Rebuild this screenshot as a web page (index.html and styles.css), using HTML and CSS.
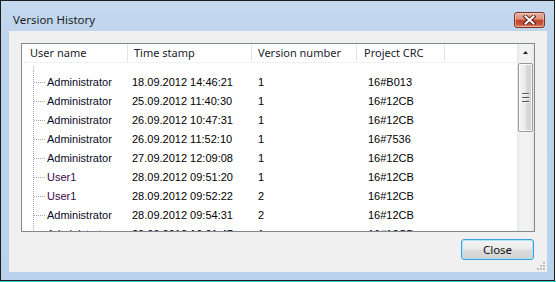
FILE: index.html
```html
<!DOCTYPE html>
<html>
<head>
<meta charset="utf-8">
<link rel="stylesheet" href="styles.css">
</head>
<body>
<div class="window">
  <div class="titlebar">
    <span class="title">Version History</span>
    <div class="xbtn">
      <svg width="13" height="10" viewBox="0 0 13 10">
        <path d="M2.5 1.5 L10.5 8.5 M10.5 1.5 L2.5 8.5" stroke="#5a2218" stroke-width="4" stroke-linecap="square" fill="none"/>
        <path d="M2.5 1.5 L10.5 8.5 M10.5 1.5 L2.5 8.5" stroke="#ffffff" stroke-width="2" stroke-linecap="square" fill="none"/>
      </svg>
    </div>
  </div>
  <div class="client">
    <div class="listview">
      <div class="lv-main">
        <div class="lv-header">
          <div class="hcell h1">User name</div>
          <div class="hcell h2">Time stamp</div>
          <div class="hcell h3">Version number</div>
          <div class="hcell h4">Project CRC</div>
          <div class="hcell h5"></div>
        </div>
        <div class="rows">
          <div class="rows-inner">
            <div class="row"><div class="c1"><span class="stub"></span><span class="admin">Administrator</span></div><div class="c2">18.09.2012 14:46:21</div><div class="c3">1</div><div class="c4">16#B013</div><div></div></div>
            <div class="row"><div class="c1"><span class="stub"></span><span class="admin">Administrator</span></div><div class="c2">25.09.2012 11:40:30</div><div class="c3">1</div><div class="c4">16#12CB</div><div></div></div>
            <div class="row"><div class="c1"><span class="stub"></span><span class="admin">Administrator</span></div><div class="c2">26.09.2012 10:47:31</div><div class="c3">1</div><div class="c4">16#12CB</div><div></div></div>
            <div class="row"><div class="c1"><span class="stub"></span><span class="admin">Administrator</span></div><div class="c2">26.09.2012 11:52:10</div><div class="c3">1</div><div class="c4">16#7536</div><div></div></div>
            <div class="row"><div class="c1"><span class="stub"></span><span class="admin">Administrator</span></div><div class="c2">27.09.2012 12:09:08</div><div class="c3">1</div><div class="c4">16#12CB</div><div></div></div>
            <div class="row"><div class="c1"><span class="stub"></span><span class="user">User1</span></div><div class="c2">28.09.2012 09:51:20</div><div class="c3">1</div><div class="c4">16#12CB</div><div></div></div>
            <div class="row"><div class="c1"><span class="stub"></span><span class="user">User1</span></div><div class="c2">28.09.2012 09:52:22</div><div class="c3">2</div><div class="c4">16#12CB</div><div></div></div>
            <div class="row"><div class="c1"><span class="stub"></span><span class="admin">Administrator</span></div><div class="c2">28.09.2012 09:54:31</div><div class="c3">2</div><div class="c4">16#12CB</div><div></div></div>
            <div class="row"><div class="c1"><span class="stub"></span><span class="admin">Administrator</span></div><div class="c2">28.09.2012 10:01:47</div><div class="c3">1</div><div class="c4">16#12CB</div><div></div></div>
          </div>
        </div>
      </div>
      <div class="vscroll">
        <div class="sb-up">
          <svg width="5" height="3" viewBox="0 0 5 3"><polygon points="2.5,0 5,3 0,3" fill="#222"/></svg>
        </div>
        <div class="sb-thumb">
          <span class="grip-line"></span>
          <span class="grip-line"></span>
          <span class="grip-line"></span>
        </div>
      </div>
    </div>
    <div class="buttons">
      <button class="btn">Close</button>
    </div>
    <svg class="sizegrip" width="10" height="10" viewBox="0 0 10 10">
      <rect x="7" y="1" width="2" height="2" fill="#bdbdbd"/>
      <rect x="4" y="4" width="2" height="2" fill="#bdbdbd"/>
      <rect x="7" y="4" width="2" height="2" fill="#bdbdbd"/>
      <rect x="1" y="7" width="2" height="2" fill="#bdbdbd"/>
      <rect x="4" y="7" width="2" height="2" fill="#bdbdbd"/>
      <rect x="7" y="7" width="2" height="2" fill="#bdbdbd"/>
    </svg>
  </div>
</div>
<div class="taskline"></div>
</body>
</html>
```

FILE: styles.css
```css
html, body {
  margin: 0;
  padding: 0;
}
body {
  width: 556px;
  height: 282px;
  overflow: hidden;
  background: #ffffff;
}
.window {
  width: 555px;
  height: 281px;
  box-sizing: border-box;
  border: 1px solid #1c1c1c;
  background: linear-gradient(#c5daef, #bcd3eb 40px, #bad2eb);
  display: flex;
  flex-direction: column;
}
.titlebar {
  height: 30px;
  display: flex;
  align-items: flex-start;
  justify-content: space-between;
  flex: none;
}
.title {
  font-family: "Noto Sans", "Open Sans", sans-serif;
  font-size: 11.5px;
  line-height: 16px;
  color: #1e1e1e;
  padding: 11px 0 0 12px;
}
.xbtn {
  margin: 11px 9px 0 0;
  width: 31px;
  height: 16px;
  box-sizing: border-box;
  border: 1px solid #7a3526;
  border-radius: 3px;
  background: linear-gradient(#eab2a2, #d98d79 45%, #c2432e 50%, #c8513a 80%, #e08e6c);
  display: flex;
  align-items: center;
  justify-content: center;
  box-shadow: inset 0 0 0 1px rgba(255, 220, 210, 0.5);
}
.client {
  position: relative;
  margin: 0 7px 8px 8px;
  height: 241px;
  background: #f0f0f0;
  padding: 12px 12px 0 12px;
  box-sizing: border-box;
}
.listview {
  width: 514px;
  height: 189px;
  box-sizing: border-box;
  border: 1px solid #828790;
  background: #ffffff;
  display: flex;
}
.lv-main {
  width: 495px;
  overflow: hidden;
}
.lv-header, .row {
  display: grid;
  grid-template-columns: 106px 124px 105px 88px 72px;
}
.lv-header {
  height: 19px;
  box-sizing: border-box;
  border-bottom: 1px solid #f0f1f3;
}
.hcell {
  font-family: "Noto Sans", "Open Sans", sans-serif;
  font-size: 11px;
  line-height: 18px;
  color: #1b1b2b;
  border-right: 1px solid #e2e3e5;
  white-space: nowrap;
}
.h1 { padding-left: 8px; }
.h2 { padding-left: 6px; }
.h3 { padding-left: 6px; }
.h4 { padding-left: 7px; }
.h5 { border-right: none; }
.rows {
  padding-top: 4px;
  height: 168px;
  box-sizing: border-box;
  background: linear-gradient(#a5a5a5 50%, transparent 50%) 11px 0 / 1px 2px repeat-y content-box;
}
.rows-inner {
  padding-top: 6px;
}
.row {
  height: 19px;
  font-family: "Liberation Sans", Arial, sans-serif;
  font-size: 11px;
  line-height: 19px;
  color: #000000;
  white-space: nowrap;
}
.c1 {
  padding-left: 12px;
  display: flex;
  align-items: center;
}
.stub {
  display: inline-block;
  width: 11px;
  height: 0;
  border-top: 1px dotted #a5a5a5;
  margin-right: 2px;
  margin-top: -1px;
}
.admin { color: #0b0b26; }
.user { color: #3a0848; }
.c2 { padding-left: 4px; }
.c3 { padding-left: 6px; }
.c4 { padding-left: 11px; }
.vscroll {
  width: 17px;
  background: linear-gradient(to right, #e6e6e6, #f2f2f2 3px, #f2f2f2 13px, #e9e9e9);
  display: flex;
  flex-direction: column;
}
.sb-up {
  height: 17px;
  display: flex;
  align-items: center;
  justify-content: center;
}
.sb-thumb {
  margin: 2px 1px 0 1px;
  height: 69px;
  box-sizing: border-box;
  border: 1px solid #9a9a9a;
  border-radius: 2px;
  background: linear-gradient(to right, #f5f5f5, #e9e9e9 50%, #d9d9d9 51%, #d3d3d3);
  box-shadow: inset 0 0 0 1px #fbfbfb;
  display: flex;
  flex-direction: column;
  align-items: center;
  justify-content: center;
  gap: 2px;
}
.grip-line {
  display: block;
  width: 7px;
  height: 1px;
  background: #545454;
  border-bottom: 1px solid #f7f7f7;
}
.buttons {
  display: flex;
  justify-content: flex-end;
  padding-right: 1px;
  margin-top: 7px;
}
.btn {
  width: 73px;
  height: 21px;
  box-sizing: border-box;
  margin: 0;
  padding: 0;
  border: 1px solid #3c9de0;
  border-radius: 3px;
  background: linear-gradient(#f3f3f3, #ececec 48%, #dddddd 52%, #d1d1d1);
  box-shadow: inset 0 0 0 1px #aee3f8;
  font-family: "Noto Sans", "Open Sans", sans-serif;
  font-size: 11.5px;
  line-height: 18px;
  color: #111111;
}
.sizegrip {
  position: absolute;
  right: 1px;
  bottom: 1px;
}
.taskline {
  height: 1px;
  background: #3cc3d3;
}
```
